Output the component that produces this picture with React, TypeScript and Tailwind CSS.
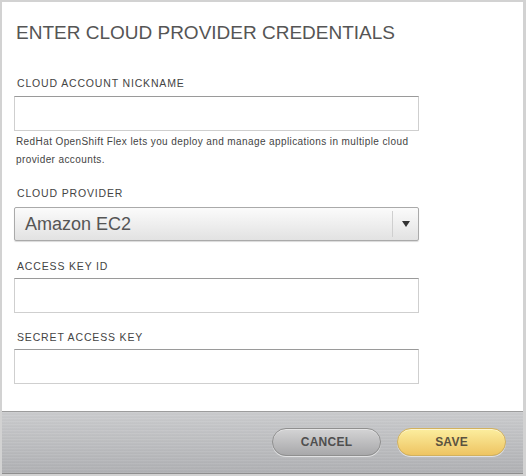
import React from "react";

const labelCls =
  "text-[10.5px] leading-[13px] tracking-[0.08em] text-[#444] pl-[3px] font-['Liberation_Sans',Arial,sans-serif]";

const inputCls =
  "block w-[405px] h-[35px] bg-white border border-[#cfcfcf] border-t-[#9a9a9a] outline-none";

export default function App() {
  return (
    <div className="w-[526px] h-[476px] bg-white border-[2px] border-[#d2d2d2] border-r-[3px] flex flex-col font-['Liberation_Sans',Arial,sans-serif]">
      <div className="flex-1 pl-[12px] pt-[19px]">
        <h1 className="text-[19px] leading-[24px] text-[#555] pl-[2px]">
          ENTER CLOUD PROVIDER CREDENTIALS
        </h1>

        <div className={`${labelCls} mt-[32px]`}>CLOUD ACCOUNT NICKNAME</div>
        <input className={`${inputCls} mt-[6px]`} />
        <p className="mt-[2px] w-[405px] pl-[2px] text-[10px] leading-[18px] tracking-[0.04em] text-[#444]">
          RedHat OpenShift Flex lets you deploy and manage applications in multiple cloud provider accounts.
        </p>

        <div className={`${labelCls} mt-[18px]`}>CLOUD PROVIDER</div>
        <div className="mt-[7px] w-[405px] h-[34px] flex items-center border border-[#aaa] rounded-[2px] bg-[linear-gradient(#fbfbfb,#e2e2e2)] shadow-[0_1px_1px_rgba(0,0,0,0.15)]">
          <span className="flex-1 pl-[10px] text-[18px] leading-[24px] text-[#555]">Amazon EC2</span>
          <span className="w-[1px] h-[26px] bg-[#cfcfcf]" />
          <span className="w-[25px] flex justify-center">
            <svg width="8" height="6" viewBox="0 0 8 6">
              <path d="M0 0H8L4 6Z" fill="#333" />
            </svg>
          </span>
        </div>

        <div className={`${labelCls} mt-[19px]`}>ACCESS KEY ID</div>
        <input className={`${inputCls} mt-[5px]`} />

        <div className={`${labelCls} mt-[18px]`}>SECRET ACCESS KEY</div>
        <input className={`${inputCls} mt-[5px]`} />
      </div>

      <div className="h-[63px] border-t border-t-[#9c9c9c] border-b border-b-[#8e8e8e] bg-[repeating-linear-gradient(180deg,rgba(255,255,255,0.06)_0px,rgba(255,255,255,0.06)_1px,rgba(0,0,0,0.03)_2px,rgba(0,0,0,0)_3px),linear-gradient(#cbccce,#b0b1b4)] flex items-center justify-end gap-[16px] pr-[17px] pb-[2px]">
        <button className="w-[109px] h-[28px] rounded-full border border-[#8f8f8f] bg-[linear-gradient(#d4d4d5,#a8a8aa)] shadow-[0_1px_0_rgba(255,255,255,0.6),inset_0_1px_0_rgba(255,255,255,0.4)] text-[12px] font-bold text-[#4f4f4f] tracking-[0.02em]">
          CANCEL
        </button>
        <button className="w-[109px] h-[28px] rounded-full border border-[#d2b15e] bg-[linear-gradient(#fcee9f,#eec462)] shadow-[0_1px_0_rgba(255,255,255,0.6),inset_0_1px_0_rgba(255,255,255,0.5)] text-[12px] font-bold text-[#5b5240] tracking-[0.02em]">
          SAVE
        </button>
      </div>
    </div>
  );
}
